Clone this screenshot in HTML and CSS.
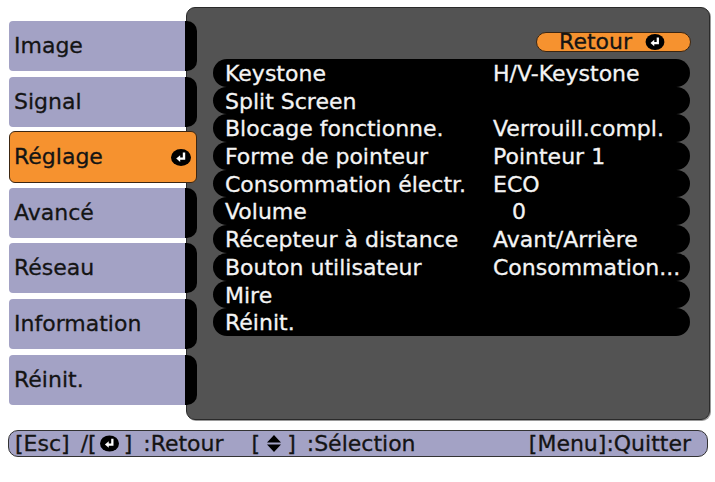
FILE: index.html
```html
<!DOCTYPE html>
<html lang="fr">
<head>
<meta charset="utf-8">
<title>Réglage</title>
<link rel="stylesheet" href="styles.css">
</head>
<body>
<div class="screen">
  <div class="top">
    <nav class="sidebar">
      <div class="tab"><span class="tab-label">Image</span><span class="tab-cap"></span></div>
      <div class="tab"><span class="tab-label">Signal</span><span class="tab-cap"></span></div>
      <div class="tab tab-active"><span class="tab-label">Réglage</span>
        <svg class="enter" viewBox="0 0 20 17" width="20" height="17"><ellipse cx="10" cy="8.5" rx="10" ry="8.5" fill="#000"/><path d="M13 3.6 V9.6 H8.4" fill="none" stroke="#fff" stroke-width="2.4"/><path d="M9.2 6.2 L5.2 9.6 L9.2 13 Z" fill="#fff"/></svg>
      </div>
      <div class="tab"><span class="tab-label">Avancé</span><span class="tab-cap"></span></div>
      <div class="tab"><span class="tab-label">Réseau</span><span class="tab-cap"></span></div>
      <div class="tab"><span class="tab-label">Information</span><span class="tab-cap"></span></div>
      <div class="tab"><span class="tab-label">Réinit.</span><span class="tab-cap"></span></div>
    </nav>
    <section class="panel">
      <div class="panel-head">
        <div class="back"><span>Retour</span>
          <svg class="enter" viewBox="0 0 20 17" width="20" height="16"><ellipse cx="10" cy="8.5" rx="10" ry="8.5" fill="#000"/><path d="M13 3.6 V9.6 H8.4" fill="none" stroke="#fff" stroke-width="2.4"/><path d="M9.2 6.2 L5.2 9.6 L9.2 13 Z" fill="#fff"/></svg>
        </div>
      </div>
      <div class="rows">
        <div class="row"><span>Keystone</span><span>H/V-Keystone</span></div>
        <div class="row"><span>Split Screen</span><span></span></div>
        <div class="row"><span>Blocage fonctionne.</span><span>Verrouill.compl.</span></div>
        <div class="row"><span>Forme de pointeur</span><span>Pointeur 1</span></div>
        <div class="row"><span>Consommation électr.</span><span>ECO</span></div>
        <div class="row"><span>Volume</span><span class="num">0</span></div>
        <div class="row"><span>Récepteur à distance</span><span>Avant/Arrière</span></div>
        <div class="row"><span>Bouton utilisateur</span><span>Consommation...</span></div>
        <div class="row"><span>Mire</span><span></span></div>
        <div class="row"><span>Réinit.</span><span></span></div>
      </div>
    </section>
  </div>
  <footer class="footer">
    <div class="help">
      <span>[Esc]</span>
      <span class="f-slash">/[</span>
      <svg class="f-icon" viewBox="0 0 20 17" width="19" height="17"><ellipse cx="10" cy="8.5" rx="10" ry="8.5" fill="#000"/><path d="M13 3.6 V9.6 H8.4" fill="none" stroke="#fff" stroke-width="2.4"/><path d="M9.2 6.2 L5.2 9.6 L9.2 13 Z" fill="#fff"/></svg>
      <span class="f-close">]</span>
      <span class="f-label">:Retour</span>
      <span class="f-open">[</span>
      <svg class="f-updown" viewBox="0 0 16 19" width="16" height="19"><path d="M8 1 L15 8.5 L1 8.5 Z M1 10.5 L15 10.5 L8 18 Z" fill="#000"/></svg>
      <span class="f-close">]</span>
      <span class="f-label">:Sélection</span>
    </div>
    <span class="help">[Menu]:Quitter</span>
  </footer>
</div>
</body>
</html>
```

FILE: styles.css
```css
body {
  margin: 0;
  background: #fff;
  font-family: "DejaVu Sans", "Verdana", sans-serif;
}

.screen {
  width: 715px;
  height: 482px;
}

.top {
  display: flex;
  padding: 7px 0 0 9px;
}

.sidebar {
  width: 188px;
  margin-right: -11px;
  padding-top: 14px;
  display: flex;
  flex-direction: column;
  gap: 5.6px;
  position: relative;
  z-index: 1;
}

.tab {
  display: flex;
  height: 50px;
}

.tab-label {
  flex: 1;
  background: #a3a2c5;
  border-radius: 4px 0 0 4px;
  font-size: 22px;
  line-height: 50px;
  padding-left: 5px;
  color: #141414;
  -webkit-text-stroke: 0.3px #141414;
}

.tab-cap {
  width: 12px;
  background: #000;
  border-radius: 0 10px 10px 0;
}

.tab-active {
  box-sizing: border-box;
  height: 52px;
  margin: -1px 0;
  background: #f6922f;
  border: 1px solid #3c2612;
  border-radius: 6px;
  align-items: center;
  padding-right: 5px;
}

.tab-active .tab-label {
  background: none;
  padding-left: 4px;
  line-height: 50px;
}

.panel {
  box-sizing: border-box;
  width: 524px;
  height: 413px;
  background: #535353;
  border: 1px solid #2a2a2a;
  border-radius: 9px;
  box-shadow: 1px 1px 0 #9a9a9a;
  padding: 24px 18px 0 26px;
}

.panel-head {
  display: flex;
  justify-content: flex-end;
}

.back {
  box-sizing: border-box;
  width: 155px;
  height: 20px;
  background: #f6922f;
  border: 1px solid #3c2612;
  border-radius: 10px;
  display: flex;
  align-items: center;
  justify-content: flex-end;
  gap: 13px;
  padding-right: 25px;
  font-size: 22px;
  line-height: 20px;
  color: #141414;
  -webkit-text-stroke: 0.3px #141414;
}

.rows {
  margin-top: 7px;
  margin-right: 1px;
}

.row {
  box-sizing: border-box;
  height: 27.7px;
  background: #000;
  border-radius: 14px;
  display: grid;
  grid-template-columns: 268px 1fr;
  padding: 1px 0 0 12px;
  color: #f4f4f4;
  font-size: 22px;
  line-height: 27.7px;
  white-space: nowrap;
  -webkit-text-stroke: 0.3px #f4f4f4;
}

.num {
  padding-left: 19px;
}

.enter {
  display: block;
  flex: none;
}

.footer {
  box-sizing: border-box;
  margin: 10px 7px 0 8px;
  height: 27px;
  background: #a3a2c5;
  border: 1px solid #333;
  border-radius: 10px;
  display: flex;
  justify-content: space-between;
  align-items: center;
  padding: 0 16px 0 6px;
  font-size: 22px;
  color: #141414;
  white-space: nowrap;
  -webkit-text-stroke: 0.3px #141414;
}

.help {
  display: flex;
  align-items: center;
}

.f-slash {
  margin-left: 11px;
}

.f-icon {
  display: block;
  margin-left: 3px;
}

.f-close {
  margin-left: 5px;
}

.f-label {
  margin-left: 11px;
}

.f-open {
  margin-left: 28px;
}

.f-updown {
  display: block;
  margin-left: 6px;
}
```
